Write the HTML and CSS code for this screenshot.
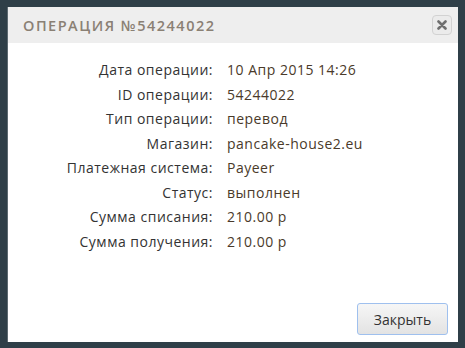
FILE: index.html
```html
<!DOCTYPE html>
<html lang="ru">
<head>
    <meta charset="UTF-8">
    <title>Операция</title>
    <link rel="stylesheet" href="styles.css">
</head>
<body>

<div class="dialog">
    <div class="dialog-header">
        <h2>Операция №54244022</h2>
        <button type="button" class="close-btn" title="Закрыть">
            <svg width="10" height="10" viewBox="0 0 10 10">
                <path d="M1.5 1.5 L8.5 8.5 M8.5 1.5 L1.5 8.5" stroke="#6f6f6f" stroke-width="2.6" stroke-linecap="round"/>
            </svg>
        </button>
    </div>
    <div class="dialog-body">
        <div class="info">
            <span class="label">Дата операции:</span><span class="value">10 Апр 2015 14:26</span>
            <span class="label">ID операции:</span><span class="value">54244022</span>
            <span class="label">Тип операции:</span><span class="value">перевод</span>
            <span class="label">Магазин:</span><span class="value">pancake-house2.eu</span>
            <span class="label">Платежная система:</span><span class="value">Payeer</span>
            <span class="label">Статус:</span><span class="value">выполнен</span>
            <span class="label">Сумма списания:</span><span class="value">210.00 р</span>
            <span class="label">Сумма получения:</span><span class="value">210.00 р</span>
        </div>
    </div>
    <div class="dialog-footer">
        <button type="button" class="btn">Закрыть</button>
    </div>
</div>

</body>
</html>
```

FILE: styles.css
```css
body {
    margin: 0;
    height: 348px;
    background-color: #2f3f48;
    font-family: "Open Sans", Arial, sans-serif;
    padding: 7px 7px 0 7px;
    box-sizing: border-box;
}

.dialog {
    width: 451px;
    height: 335px;
    background-color: #fff;
    border-left: 1px solid #5d6a71;
    display: flex;
    flex-direction: column;
    box-sizing: border-box;
}

.dialog-header {
    height: 36px;
    background-color: #eeeeee;
    display: flex;
    align-items: center;
    justify-content: space-between;
    padding: 0 6px 0 15px;
}

.dialog-header h2 {
    margin: 0;
    font-size: 14.5px;
    font-weight: 600;
    letter-spacing: 1.5px;
    text-transform: uppercase;
    color: #8a8074;
}

.close-btn {
    width: 20px;
    height: 20px;
    padding: 0;
    border: 1px solid #d2d2d2;
    border-radius: 4px;
    background-color: #ebebeb;
    display: flex;
    align-items: center;
    justify-content: center;
}

.dialog-body {
    flex: 1;
    padding: 17px 0 0 0;
}

.info {
    display: grid;
    grid-template-columns: 205px auto;
    column-gap: 14px;
    row-gap: 5px;
    font-size: 14px;
    line-height: 19.5px;
    letter-spacing: 0.5px;
}

.label {
    text-align: right;
    color: #333;
}

.value {
    color: #4a3a2a;
}

.dialog-footer {
    display: flex;
    justify-content: flex-end;
    padding: 0 10px 7px 0;
}

.btn {
    width: 91px;
    height: 32px;
    border: 1px solid #9fc0ee;
    border-radius: 3px;
    background: linear-gradient(#f6f6f6, #e3e3e3);
    font-family: "Open Sans", Arial, sans-serif;
    font-size: 14px;
    color: #333;
}
```
